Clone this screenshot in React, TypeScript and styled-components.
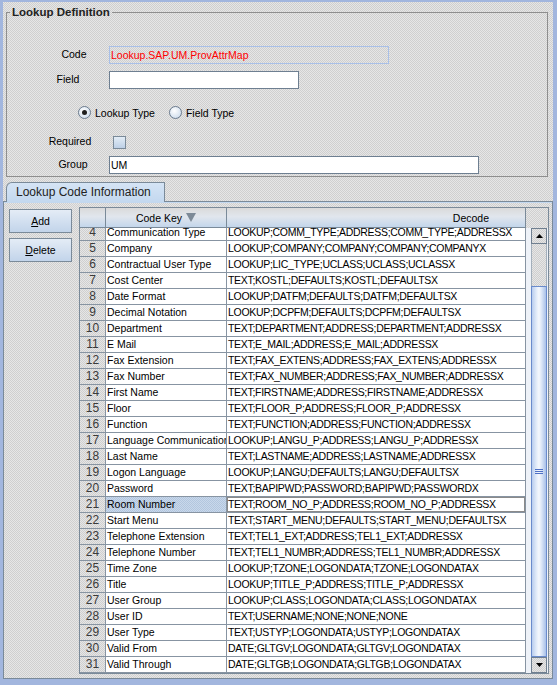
import React from "react";
import styled, { createGlobalStyle, css } from "styled-components";

const dither = (a: string, b: string) => css`
  background-color: ${a};
  background-image: repeating-conic-gradient(${a} 0% 25%, ${b} 0% 50%);
  background-size: 2px 2px;
`;

const GlobalStyle = createGlobalStyle`
  html, body {
    margin: 0;
    padding: 0;
  }
  body {
    font-family: "Liberation Sans", Arial, sans-serif;
    font-size: 10.5px;
    color: #000;
  }
  * {
    box-sizing: border-box;
  }
`;

const ROW_H = 16;
const VIEWPORT_H = 445;
const TOTAL_ROWS = 31;
const ARROW_H = 16;

const rows: [number, string, string][] = [
  [4, "Communication Type", "LOOKUP;COMM_TYPE;ADDRESS;COMM_TYPE;ADDRESSX"],
  [5, "Company", "LOOKUP;COMPANY;COMPANY;COMPANY;COMPANYX"],
  [6, "Contractual User Type", "LOOKUP;LIC_TYPE;UCLASS;UCLASS;UCLASSX"],
  [7, "Cost Center", "TEXT;KOSTL;DEFAULTS;KOSTL;DEFAULTSX"],
  [8, "Date Format", "LOOKUP;DATFM;DEFAULTS;DATFM;DEFAULTSX"],
  [9, "Decimal Notation", "LOOKUP;DCPFM;DEFAULTS;DCPFM;DEFAULTSX"],
  [10, "Department", "TEXT;DEPARTMENT;ADDRESS;DEPARTMENT;ADDRESSX"],
  [11, "E Mail", "TEXT;E_MAIL;ADDRESS;E_MAIL;ADDRESSX"],
  [12, "Fax Extension", "TEXT;FAX_EXTENS;ADDRESS;FAX_EXTENS;ADDRESSX"],
  [13, "Fax Number", "TEXT;FAX_NUMBER;ADDRESS;FAX_NUMBER;ADDRESSX"],
  [14, "First Name", "TEXT;FIRSTNAME;ADDRESS;FIRSTNAME;ADDRESSX"],
  [15, "Floor", "TEXT;FLOOR_P;ADDRESS;FLOOR_P;ADDRESSX"],
  [16, "Function", "TEXT;FUNCTION;ADDRESS;FUNCTION;ADDRESSX"],
  [17, "Language Communication", "LOOKUP;LANGU_P;ADDRESS;LANGU_P;ADDRESSX"],
  [18, "Last Name", "TEXT;LASTNAME;ADDRESS;LASTNAME;ADDRESSX"],
  [19, "Logon Language", "LOOKUP;LANGU;DEFAULTS;LANGU;DEFAULTSX"],
  [20, "Password", "TEXT;BAPIPWD;PASSWORD;BAPIPWD;PASSWORDX"],
  [21, "Room Number", "TEXT;ROOM_NO_P;ADDRESS;ROOM_NO_P;ADDRESSX"],
  [22, "Start Menu", "TEXT;START_MENU;DEFAULTS;START_MENU;DEFAULTSX"],
  [23, "Telephone Extension", "TEXT;TEL1_EXT;ADDRESS;TEL1_EXT;ADDRESSX"],
  [24, "Telephone Number", "TEXT;TEL1_NUMBR;ADDRESS;TEL1_NUMBR;ADDRESSX"],
  [25, "Time Zone", "LOOKUP;TZONE;LOGONDATA;TZONE;LOGONDATAX"],
  [26, "Title", "LOOKUP;TITLE_P;ADDRESS;TITLE_P;ADDRESSX"],
  [27, "User Group", "LOOKUP;CLASS;LOGONDATA;CLASS;LOGONDATAX"],
  [28, "User ID", "TEXT;USERNAME;NONE;NONE;NONE"],
  [29, "User Type", "TEXT;USTYP;LOGONDATA;USTYP;LOGONDATAX"],
  [30, "Valid From", "DATE;GLTGV;LOGONDATA;GLTGV;LOGONDATAX"],
  [31, "Valid Through", "DATE;GLTGB;LOGONDATA;GLTGB;LOGONDATAX"],
];

const SELECTED_ROW = 21;

const Window = styled.div`
  width: 557px;
  height: 685px;
  display: flex;
  flex-direction: column;
  border-style: solid;
  border-color: #a2b6de;
  border-width: 2px 4px 6px 3px;
  ${dither("#cfcfcf", "#e6e6e6")}
`;

const Fieldset = styled.fieldset`
  margin: 4px 5px 0 3px;
  padding: 0 0 2px 0;
  border: 1px solid #8e8e8e;
  min-width: 0;
`;

const Legend = styled.legend`
  margin-left: 3px;
  padding: 0 2px;
  font-weight: bold;
  font-size: 11.5px;
  line-height: 13px;
  color: #222;
`;

const FormBody = styled.div`
  display: flex;
  flex-direction: column;
  padding-top: 27px;
`;

const FormRow = styled.div<{ $gap: number }>`
  display: flex;
  align-items: center;
  height: 18px;
  margin-top: ${(p) => p.$gap}px;
`;

const Label = styled.span<{ $shift?: number }>`
  width: 70px;
  margin-left: ${(p) => 28 + (p.$shift || 0)}px;
  margin-right: ${(p) => 4 - (p.$shift || 0)}px;
  padding-bottom: 2px;
  text-align: center;
  white-space: nowrap;
`;

const CodeField = styled.div`
  width: 280px;
  height: 18px;
  border: 1px solid #a9c0e8;
  color: #ff0000;
  padding-left: 1px;
  line-height: 16px;
  white-space: nowrap;
`;

const TextBox = styled.input<{ $width: number }>`
  width: ${(p) => p.$width}px;
  height: 18px;
  margin: 0;
  padding: 0 1px;
  border: 1px solid #6e7f91;
  background: #fff;
  font: inherit;
  color: #000;
  outline: none;
`;

const RadioGroup = styled.div`
  display: flex;
  align-items: center;
  margin-left: 71px;
  gap: 14px;
`;

const RadioOption = styled.label`
  display: flex;
  align-items: center;
  gap: 4px;
  padding-bottom: 1px;
`;

const RadioCircle = styled.span<{ $checked?: boolean }>`
  position: relative;
  width: 13px;
  height: 13px;
  border-radius: 50%;
  border: 1px solid #6b7b8e;
  background: radial-gradient(circle at 40% 35%, #ffffff, #c3d4e8);
  ${(p) =>
    p.$checked &&
    css`
      &::after {
        content: "";
        position: absolute;
        left: 3px;
        top: 3px;
        width: 5px;
        height: 5px;
        border-radius: 50%;
        background: #1e1e1e;
      }
    `}
`;

const Checkbox = styled.span`
  width: 13px;
  height: 13px;
  margin-left: 4px;
  border: 1px solid #7a8a99;
  background: linear-gradient(#e3ecf6, #bdd0e6);
`;

const TabSection = styled.div`
  flex: 1;
  min-height: 0;
  display: flex;
  flex-direction: column;
  margin-top: 5px;
`;

const TabStrip = styled.div`
  display: flex;
  align-items: flex-end;
  height: 19px;
  padding-left: 3px;
`;

const Tab = styled.div`
  position: relative;
  z-index: 1;
  width: 159px;
  height: 20px;
  margin-bottom: -1px;
  padding-left: 9px;
  border: 1px solid #7a8a99;
  border-bottom: none;
  border-top-left-radius: 6px;
  background: linear-gradient(#d5e4f5, #c3d8ef);
  font-size: 12px;
  line-height: 18px;
  color: #222;
  white-space: nowrap;
`;

const Panel = styled.div`
  flex: 1;
  min-height: 0;
  display: flex;
  gap: 7px;
  padding: 5px 3px 4px 5px;
  border: 1px solid #7a8a99;
  box-shadow: inset 0 1px 0 #c3d8ef;
`;

const ButtonColumn = styled.div`
  display: flex;
  flex-direction: column;
  gap: 5px;
  padding-top: 2px;
`;

const Button = styled.button`
  width: 63px;
  height: 24px;
  padding: 0;
  border: 1px solid #7a8a99;
  background: linear-gradient(#e4ecf6, #c2d4ea);
  font: inherit;
  color: #000;
`;

const TablePane = styled.div`
  flex: 1;
  min-height: 0;
  display: grid;
  grid-template-columns: 1fr 22px;
  grid-template-rows: 20px 1fr;
  border: 1px solid #7a8a99;
  background: #fff;
`;

const columns = css`
  display: grid;
  grid-template-columns: 26px 121px 1fr;
`;

const HeaderRow = styled.div`
  ${columns}
`;

const HeaderCell = styled.div<{ $justify?: string }>`
  display: flex;
  align-items: center;
  justify-content: ${(p) => p.$justify || "center"};
  gap: 4px;
  padding-right: ${(p) => (p.$justify === "flex-end" ? "36px" : "0")};
  border-right: 1px solid #7a8a99;
  border-bottom: 1px solid #7a8a99;
  background: linear-gradient(#dadada, #e1e6ed 45%, #c3d6eb);
  white-space: nowrap;
`;

const Corner = styled.div`
  ${dither("#cfcfcf", "#e6e6e6")}
`;

const Viewport = styled.div`
  min-height: 0;
  overflow: hidden;
`;

const RowsInner = styled.div`
  margin-top: -3px;
`;

const Row = styled.div`
  ${columns}
  height: ${ROW_H}px;
`;

const cellBase = css`
  border-right: 1px solid #8794a2;
  border-bottom: 1px solid #8794a2;
  line-height: 15px;
  white-space: nowrap;
  overflow: hidden;
`;

const NumCell = styled.div`
  ${cellBase}
  ${dither("#cfcfcf", "#e6e6e6")}
  text-align: center;
  font-size: 12px;
  color: #3a3a3a;
`;

const KeyCell = styled.div<{ $selected?: boolean }>`
  ${cellBase}
  padding-left: 1px;
  ${(p) => (p.$selected ? dither("#b2c6de", "#c9d8eb") : "background: #fff;")}
`;

const DecodeCell = styled.div<{ $focused?: boolean }>`
  ${cellBase}
  padding-left: 1px;
  letter-spacing: -0.3px;
  background: #fff;
  ${(p) => p.$focused && "box-shadow: inset 0 0 0 1px #8a8a8a;"}
`;

const ScrollColumn = styled.div`
  min-height: 0;
  overflow: hidden;
  display: flex;
  flex-direction: column;
  padding: 0 1px 0 5px;
  background: #eef2f8;
`;

const ArrowButton = styled.div`
  flex: none;
  height: ${ARROW_H}px;
  display: flex;
  align-items: center;
  justify-content: center;
  border: 1px solid #6f7f90;
  ${dither("#cfcfcf", "#e6e6e6")}
`;

const TrackGap = styled.div`
  flex: 1;
  border-left: 1px solid #a3afbb;
  border-right: 1px solid #a3afbb;
  ${dither("#cfcfcf", "#e6e6e6")}
`;

const Thumb = styled.div`
  flex: none;
  display: flex;
  align-items: center;
  justify-content: center;
  border: 1px solid #6a8bcc;
  background: linear-gradient(
    to right,
    #b9cdee,
    #e6eefa 35%,
    #f5f8fd 50%,
    #d8e4f6 70%,
    #a8c0e8
  );
`;

const Grip = styled.div`
  width: 8px;
  display: flex;
  flex-direction: column;
  gap: 1px;
  span {
    height: 1px;
    background: #4e70c6;
  }
`;

const Arrow = ({ down }: { down?: boolean }) => (
  <svg width="7" height="4" viewBox="0 0 7 4">
    <polygon points={down ? "0,0 7,0 3.5,4" : "0,4 7,4 3.5,0"} fill="#000" />
  </svg>
);

const SortArrow = () => (
  <svg width="10" height="9" viewBox="0 0 10 9">
    <polygon points="0,0 10,0 5,9" fill="#7d8a97" />
  </svg>
);

export default function App() {
  const track = VIEWPORT_H - ARROW_H * 2;
  const thumbH = Math.round((track * VIEWPORT_H) / (TOTAL_ROWS * ROW_H));

  return (
    <>
      <GlobalStyle />
      <Window>
        <Fieldset>
          <Legend>Lookup Definition</Legend>
          <FormBody>
            <FormRow $gap={0}>
              <Label $shift={4}>Code</Label>
              <CodeField>Lookup.SAP.UM.ProvAttrMap</CodeField>
            </FormRow>
            <FormRow $gap={7}>
              <Label $shift={-2}>Field</Label>
              <TextBox $width={190} defaultValue="" readOnly />
            </FormRow>
            <FormRow $gap={15}>
              <RadioGroup>
                <RadioOption>
                  <RadioCircle $checked />
                  Lookup Type
                </RadioOption>
                <RadioOption>
                  <RadioCircle />
                  Field Type
                </RadioOption>
              </RadioGroup>
            </FormRow>
            <FormRow $gap={11}>
              <Label>Required</Label>
              <Checkbox />
            </FormRow>
            <FormRow $gap={5}>
              <Label $shift={3}>Group</Label>
              <TextBox $width={370} defaultValue="UM" readOnly />
            </FormRow>
          </FormBody>
        </Fieldset>

        <TabSection>
          <TabStrip>
            <Tab>Lookup Code Information</Tab>
          </TabStrip>
          <Panel>
            <ButtonColumn>
              <Button>
                <u>A</u>dd
              </Button>
              <Button>
                <u>D</u>elete
              </Button>
            </ButtonColumn>
            <TablePane>
              <HeaderRow>
                <HeaderCell />
                <HeaderCell>
                  Code Key
                  <SortArrow />
                </HeaderCell>
                <HeaderCell $justify="flex-end">Decode</HeaderCell>
              </HeaderRow>
              <Corner />
              <Viewport>
                <RowsInner>
                  {rows.map(([n, key, decode]) => (
                    <Row key={n}>
                      <NumCell>{n}</NumCell>
                      <KeyCell $selected={n === SELECTED_ROW}>{key}</KeyCell>
                      <DecodeCell $focused={n === SELECTED_ROW}>{decode}</DecodeCell>
                    </Row>
                  ))}
                </RowsInner>
              </Viewport>
              <ScrollColumn>
                <ArrowButton>
                  <Arrow />
                </ArrowButton>
                <TrackGap />
                <Thumb style={{ height: thumbH }}>
                  <Grip>
                    <span />
                    <span />
                    <span />
                  </Grip>
                </Thumb>
                <ArrowButton>
                  <Arrow down />
                </ArrowButton>
              </ScrollColumn>
            </TablePane>
          </Panel>
        </TabSection>
      </Window>
    </>
  );
}
